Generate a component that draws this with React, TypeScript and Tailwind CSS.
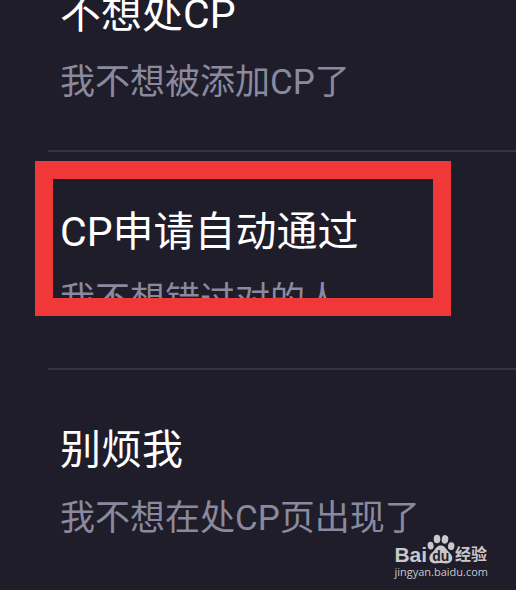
type Option = { title: string; note: string; highlighted?: boolean };

const options: Option[] = [
  { title: "不想处CP", note: "我不想被添加CP了" },
  { title: "CP申请自动通过", note: "我不想错过对的人", highlighted: true },
  { title: "别烦我", note: "我不想在处CP页出现了" },
];

function OptionRow({ title, note, highlighted }: Option) {
  return (
    <li className="relative ml-12 border-b-2 border-[#34323f] pt-[50px] pb-[41px] pl-3 whitespace-nowrap last:border-transparent">
      <h2 className="text-[41px] leading-[60px] text-white">{title}</h2>
      <p className="mt-[13px] text-[35px] leading-[52px] text-[#8a8a9f]">{note}</p>
      {highlighted && (
        <div className="absolute top-[9px] -left-[13px] h-[155px] w-[416px] border-[18px] border-[#f03838]" />
      )}
    </li>
  );
}

function Paw() {
  return (
    <svg viewBox="0 0 28 30" className="h-[30px] w-7" aria-hidden="true">
      <g fill="#c9c8cc">
        <ellipse cx="3.6" cy="11.6" rx="3" ry="3.9" transform="rotate(-8 3.6 11.6)" />
        <ellipse cx="10" cy="5" rx="3.3" ry="4.3" />
        <ellipse cx="18" cy="5.4" rx="3.3" ry="4.3" transform="rotate(8 18 5.4)" />
        <ellipse cx="24.2" cy="12.2" rx="3.2" ry="3.9" transform="rotate(8 24.2 12.2)" />
        <path d="M13.8 11.6c3.4 0 4.6 2.4 6.2 4.4 1.8 2.2 5.2 4.2 5.2 8 0 3.4-2.4 5.4-5.4 5.4-2 0-3.8-.4-6-.4s-3.8.4-5.8.4c-3.2 0-5.600-2-5.600-5.400 0-3.600 3.200-5.600 5-7.800 1.600-2 3-4.600 6.400-4.600z" />
      </g>
      <text x="13.8" y="27" textAnchor="middle" fill="#1f1d2a" className="font-['Liberation_Sans',sans-serif] text-[14px] font-bold">
        du
      </text>
    </svg>
  );
}

function Watermark() {
  return (
    <div className="absolute right-7 bottom-[10px] text-[#c9c8cc]">
      <div className="flex items-end">
        <span className="font-['Liberation_Sans',sans-serif] text-[21px] leading-[18px] font-bold">Bai</span>
        <Paw />
        <span className="font-['Noto_Sans_CJK_SC',sans-serif] text-[16px] leading-[22px] font-bold">经验</span>
      </div>
      <div className="font-['Open_Sans','Noto_Sans',sans-serif] text-[11px] leading-4 font-medium">jingyan.baidu.com</div>
    </div>
  );
}

export default function App() {
  return (
    <main className="relative min-h-screen overflow-hidden bg-[#1f1d2a] font-[Roboto,'Noto_Sans_CJK_SC',sans-serif]">
      <ul className="-mt-[66px]">
        {options.map((option) => (
          <OptionRow key={option.title} {...option} />
        ))}
      </ul>
      <Watermark />
    </main>
  );
}
